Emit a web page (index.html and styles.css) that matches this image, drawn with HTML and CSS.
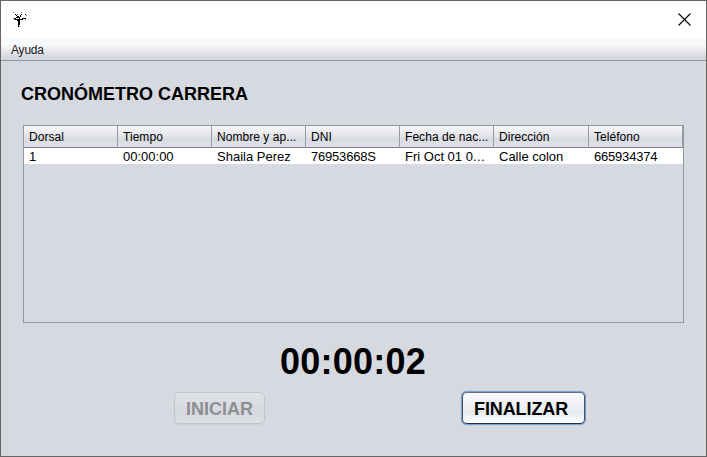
FILE: index.html
```html
<!DOCTYPE html>
<html lang="es">
<head>
<meta charset="utf-8">
<title>Cronómetro carrera</title>
<link rel="stylesheet" href="styles.css">
</head>
<body>
<div class="window">
  <header class="titlebar">
    <svg class="app-icon" width="18" height="18" viewBox="0 0 18 18" shape-rendering="crispEdges">
      <path fill="#000" d="M7 8h2v6H7zM7 14h1v2H7zM3 7h2v1H3zM4 8h3v1H4zM6 9h1v1H6zM4 3h1v1H4zM5 4h1v1H5zM6 5h2v1H6zM5 6h3v1H5zM8 6h1v2H8zM9 4h1v2H9zM10 3h1v1h-1zM9 8h3v1H9zM11 7h4v1h-4zM14 3h1v1h-1z"/>
      <path fill="#777" d="M2 1h1v1H2zM10 1h1v1h-1zM15 4h1v1h-1zM14 8h1v1h-1zM3 8h1v1H3zM6 3h1v1H6zM2 7h1v1H2zM8 15h1v1H8z"/>
    </svg>
    <svg class="close" width="13" height="13" viewBox="0 0 13 13">
      <path d="M.5.5l12 12M12.5.5L.5 12.5" stroke="#000" stroke-width="1.1"/>
    </svg>
  </header>
  <nav class="menubar"><span>Ayuda</span></nav>
  <main>
    <h1>CRONÓMETRO CARRERA</h1>
    <div class="table">
      <div class="row head">
        <span>Dorsal</span><span>Tiempo</span><span>Nombre y ap...</span><span>DNI</span><span>Fecha de nac...</span><span>Dirección</span><span>Teléfono</span>
      </div>
      <div class="row data">
        <span>1</span><span>00:00:00</span><span>Shaila Perez</span><span class="num">76953668S</span><span>Fri Oct 01 0<i>...</i></span><span>Calle colon</span><span class="num">665934374</span>
      </div>
    </div>
    <div class="timer">00:00:02</div>
    <div class="actions">
      <button class="start" disabled>INICIAR</button>
      <button class="finish">FINALIZAR</button>
    </div>
  </main>
</div>
</body>
</html>
```
FILE: styles.css
```css
* { box-sizing: border-box; }
body {
  margin: 0;
  font-family: "Liberation Sans", Arial, sans-serif;
  color: #000;
}
.window {
  width: 707px;
  height: 457px;
  border: 1px solid #656565;
  background: #d6d9e0;
  overflow: hidden;
}
.titlebar {
  height: 37px;
  padding: 11px 14px 0 10px;
  display: flex;
  justify-content: space-between;
  background: #fff;
}
.app-icon { margin-top: -1px; }
.close { margin-top: 1px; margin-right: 1px; }
.menubar {
  height: 23px;
  padding-left: 10px;
  border-bottom: 1px solid #9297a1;
  background: linear-gradient(#f9fafa 0, #f8f9fa 30%, #d7d8df 85%, #d5d7de);
  font-size: 12px;
  line-height: 25px;
  color: #232323;
  letter-spacing: -.2px;
}
main { padding: 0 22px; }
h1 {
  margin: 23px 0 0 -2px;
  height: 21px;
  font-size: 18px;
  line-height: 21px;
}
.table {
  height: 198px;
  margin-top: 20px;
  border: 1px solid #9297a1;
}
.row {
  display: grid;
  grid-template-columns: repeat(5, 94px) 95px 94px;
  white-space: nowrap;
}
.row span { padding-left: 5px; }
.head {
  height: 22px;
  border-bottom: 1px solid #7d828c;
  background: linear-gradient(#f5f6f7, #e2e4e8 50%, #d8dbe1 60%, #dfe2e8);
  font-size: 12px;
  line-height: 22px;
  letter-spacing: .05px;
}
.head span { border-right: 1px solid #969ba5; }
.data {
  height: 16px;
  background: #fff;
  font-size: 13px;
  line-height: 17px;
}
.data i {
  font-style: normal;
  letter-spacing: .4px;
}
.data .num { letter-spacing: -.2px; }
.timer {
  margin-top: 18px;
  padding-left: 257px;
  height: 41px;
  font-size: 36px;
  font-weight: bold;
  line-height: 41px;
  letter-spacing: .25px;
}
.actions {
  display: flex;
  justify-content: space-between;
  padding: 10px 99px 0 151px;
}
button {
  height: 32px;
  margin: 0;
  padding: 1px 0 0 11px;
  border-radius: 5px;
  font: bold 18px/30px "Liberation Sans", Arial, sans-serif;
  text-align: left;
}
.start {
  width: 91px;
  border: 1px solid #bfc3ca;
  background: linear-gradient(#dfe2e6, #d6d9df 65%, #dcdfe4);
  color: #8e8f91;
  box-shadow: 0 1px 0 #cdd0d7;
}
.finish {
  width: 123px;
  border: 1px solid;
  border-color: #646e7c #46505c #22303e;
  background: linear-gradient(#fcfcfd, #eceef2 45%, #e7eaef 65%, #fff);
  color: #000;
  letter-spacing: -.1px;
  box-shadow: 0 0 0 1px #73a4d1, 0 0 1px 1px #73a4d1;
}
```
